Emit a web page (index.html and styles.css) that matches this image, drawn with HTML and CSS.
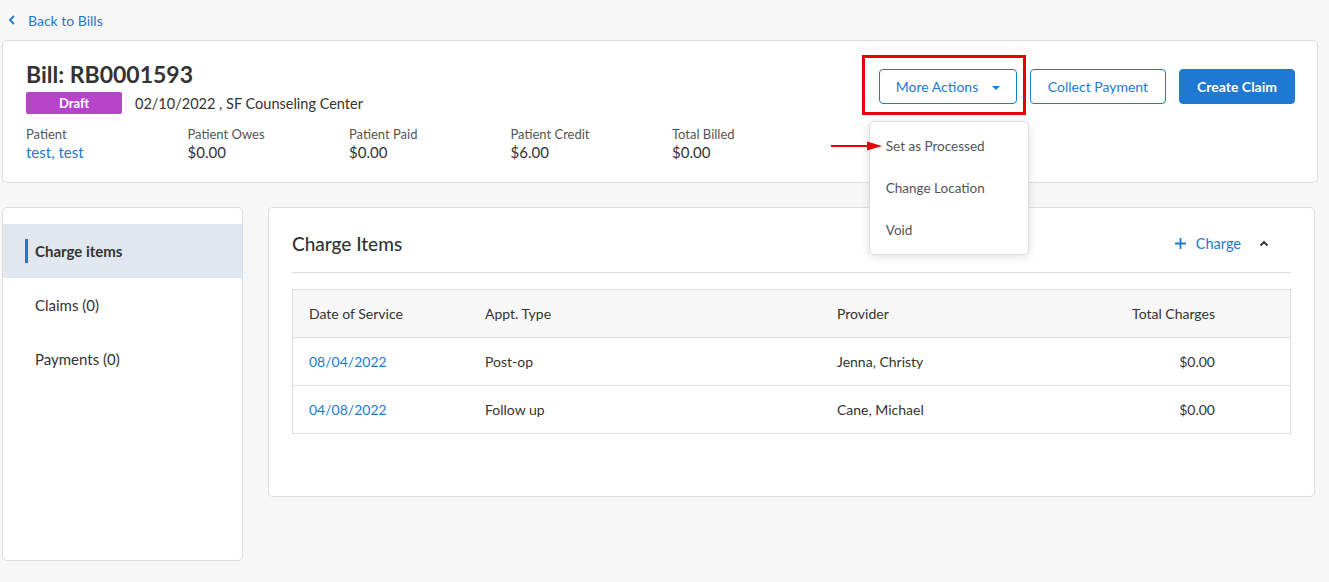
FILE: index.html
```html
<!DOCTYPE html>
<html lang="en">
<head>
    <meta charset="UTF-8">
    <meta name="viewport" content="width=device-width, initial-scale=1.0">
    <title>Bill RB0001593</title>
    <link rel="stylesheet" href="styles.css">
</head>
<body>
    <div class="page">
        <a class="back-link" href="#">
            <svg width="8" height="10" viewBox="0 0 8 10"><path d="M6 1 L2 5 L6 9" fill="none" stroke="#1f78d1" stroke-width="1.8"/></svg>
            <span>Back to Bills</span>
        </a>

        <div class="bill-card">
            <div class="bill-info">
                <h1>Bill: RB0001593</h1>
                <div class="bill-sub">
                    <span class="badge">Draft</span>
                    <span>02/10/2022 , SF Counseling Center</span>
                </div>
                <div class="stats">
                    <div class="stat">
                        <div class="stat-label">Patient</div>
                        <a class="stat-value link" href="#">test, test</a>
                    </div>
                    <div class="stat">
                        <div class="stat-label">Patient Owes</div>
                        <div class="stat-value">$0.00</div>
                    </div>
                    <div class="stat">
                        <div class="stat-label">Patient Paid</div>
                        <div class="stat-value">$0.00</div>
                    </div>
                    <div class="stat">
                        <div class="stat-label">Patient Credit</div>
                        <div class="stat-value">$6.00</div>
                    </div>
                    <div class="stat">
                        <div class="stat-label">Total Billed</div>
                        <div class="stat-value">$0.00</div>
                    </div>
                </div>
            </div>
            <div class="actions">
                <div class="more-actions">
                    <span class="highlight-box"></span>
                    <button class="btn btn-outline">More Actions <span class="caret"></span></button>
                    <ul class="dropdown">
                        <li>Set as Processed</li>
                        <li>Change Location</li>
                        <li>Void</li>
                    </ul>
                    <svg class="pointer-arrow" width="52" height="12" viewBox="0 0 52 12"><line x1="0" y1="6" x2="38" y2="6" stroke="#e8000b" stroke-width="2"/><path d="M36 1.5 L51 6 L36 10.5 Z" fill="#e8000b"/></svg>
                </div>
                <button class="btn btn-outline">Collect Payment</button>
                <button class="btn btn-primary">Create Claim</button>
            </div>
        </div>

        <div class="content">
            <div class="side-nav">
                <div class="nav-item active">Charge items</div>
                <div class="nav-item">Claims (0)</div>
                <div class="nav-item">Payments (0)</div>
            </div>
            <div class="main-card">
                <div class="main-head">
                    <h2>Charge Items</h2>
                    <div class="head-tools">
                        <a class="add-charge" href="#">
                            <svg width="11" height="11" viewBox="0 0 11 11"><path d="M5.5 0 V11 M0 5.5 H11" stroke="#1f78d1" stroke-width="1.8"/></svg>
                            Charge
                        </a>
                        <svg class="collapse" width="10" height="7" viewBox="0 0 10 7"><path d="M1.5 5.5 L5 2 L8.5 5.5" fill="none" stroke="#333" stroke-width="1.8"/></svg>
                    </div>
                </div>
                <table class="charges">
                    <thead>
                        <tr>
                            <th class="c-date">Date of Service</th>
                            <th class="c-type">Appt. Type</th>
                            <th class="c-prov">Provider</th>
                            <th class="num">Total Charges</th>
                            <th class="c-end"></th>
                        </tr>
                    </thead>
                    <tbody>
                        <tr>
                            <td><a href="#">08/04/2022</a></td>
                            <td>Post-op</td>
                            <td>Jenna, Christy</td>
                            <td class="num">$0.00</td>
                            <td></td>
                        </tr>
                        <tr>
                            <td><a href="#">04/08/2022</a></td>
                            <td>Follow up</td>
                            <td>Cane, Michael</td>
                            <td class="num">$0.00</td>
                            <td></td>
                        </tr>
                    </tbody>
                </table>
            </div>
        </div>
    </div>
</body>
</html>
```

FILE: styles.css
```css
html, body {
    margin: 0;
    padding: 0;
    font-family: Lato, 'Open Sans', sans-serif;
    background-color: #f7f7f7;
    color: #333;
}
a {
    color: #1f78d1;
    text-decoration: none;
}
.page {
    padding: 0 11px 0 2px;
}
.back-link {
    display: flex;
    align-items: center;
    gap: 12px;
    height: 40px;
    padding-left: 6px;
    font-size: 14px;
}
.bill-card {
    display: flex;
    justify-content: space-between;
    background: #fff;
    border: 1px solid #ddd;
    border-radius: 5px;
    padding: 19px 22px 20px 23px;
}
.bill-card h1 {
    margin: 0;
    font-size: 23px;
    line-height: 28px;
    font-weight: 700;
    color: #333;
}
.bill-sub {
    display: flex;
    align-items: center;
    gap: 13px;
    margin-top: 4px;
    font-size: 14.5px;
}
.badge {
    display: inline-block;
    width: 96px;
    height: 22px;
    line-height: 22px;
    text-align: center;
    background: #b544c8;
    color: #fff;
    font-weight: 700;
    font-size: 13px;
    border-radius: 2px;
}
.stats {
    display: grid;
    grid-template-columns: repeat(5, 161.5px);
    margin-top: 12px;
}
.stat-label {
    font-size: 13px;
    line-height: 16px;
    color: #555;
}
.stat-value {
    display: block;
    font-size: 15px;
    line-height: 20px;
    color: #333;
}
.stat-value.link {
    color: #1f78d1;
}
.actions {
    display: flex;
    align-items: flex-start;
    gap: 13px;
    padding-top: 9px;
}
.btn {
    height: 35px;
    padding: 0 17px;
    font-family: inherit;
    font-size: 14px;
    white-space: nowrap;
    border-radius: 4px;
    cursor: pointer;
}
.btn-outline {
    background: #fff;
    color: #1f78d1;
    border: 1px solid #1f78d1;
}
.btn-primary {
    background: #1f78d1;
    color: #fff;
    border: 1px solid #1f78d1;
    font-weight: 700;
}
.more-actions {
    position: relative;
}
.more-actions .btn {
    width: 138px;
    padding: 0;
}
.caret {
    display: inline-block;
    margin-left: 10px;
    vertical-align: middle;
    border-left: 4px solid transparent;
    border-right: 4px solid transparent;
    border-top: 4px solid #1f78d1;
}
.highlight-box {
    position: absolute;
    top: -14px;
    left: -17px;
    right: -9px;
    bottom: -11px;
    border: 3px solid #e8000b;
}
.pointer-arrow {
    position: absolute;
    left: -48px;
    top: 71px;
    z-index: 3;
}
.dropdown {
    position: absolute;
    top: 52px;
    left: -10px;
    width: 158px;
    margin: 0;
    padding: 3px 0;
    list-style: none;
    background: #fff;
    border: 1px solid #ddd;
    border-radius: 5px;
    box-shadow: 0 2px 8px rgba(0, 0, 0, 0.12);
    z-index: 2;
}
.dropdown li {
    height: 42px;
    line-height: 42px;
    padding-left: 16px;
    font-size: 13.5px;
    color: #555;
}
.content {
    display: flex;
    gap: 25px;
    margin-top: 24px;
}
.side-nav {
    width: 239px;
    height: 336px;
    flex-shrink: 0;
    background: #fff;
    border: 1px solid #ddd;
    border-radius: 5px;
    padding-top: 16px;
}
.nav-item {
    position: relative;
    height: 54px;
    line-height: 54px;
    padding-left: 32px;
    font-size: 15px;
    color: #333;
}
.nav-item.active {
    background: #e1e7ef;
    font-weight: 700;
}
.nav-item.active::before {
    content: '';
    position: absolute;
    left: 22px;
    top: 15px;
    width: 3px;
    height: 24px;
    background: #1f78d1;
}
.main-card {
    flex: 1;
    margin-right: 3px;
    background: #fff;
    border: 1px solid #ddd;
    border-radius: 5px;
    padding: 20px 23px 62px 23px;
    align-self: flex-start;
}
.main-head {
    display: flex;
    justify-content: space-between;
    align-items: center;
    height: 30px;
    padding-bottom: 14px;
    border-bottom: 1px solid #ddd;
}
.main-head h2 {
    margin: 0;
    font-size: 19px;
    font-weight: 500;
    color: #333;
}
.head-tools {
    display: flex;
    align-items: center;
    gap: 18px;
    padding-right: 22px;
}
.add-charge {
    display: flex;
    align-items: center;
    gap: 10px;
    font-size: 14.5px;
}
.charges {
    width: 100%;
    margin-top: 16px;
    border-collapse: collapse;
    border: 1px solid #ddd;
    font-size: 14px;
}
.charges th, .charges td {
    height: 47px;
    padding: 0 16px;
    text-align: left;
    border-bottom: 1px solid #ddd;
    color: #333;
}
.charges th {
    background: #f7f7f7;
    font-weight: 400;
}
.charges .num {
    text-align: right;
}
.c-date { width: 144px; }
.c-type { width: 320px; }
.c-prov { width: 220px; }
.c-end { width: 27px; }
```
